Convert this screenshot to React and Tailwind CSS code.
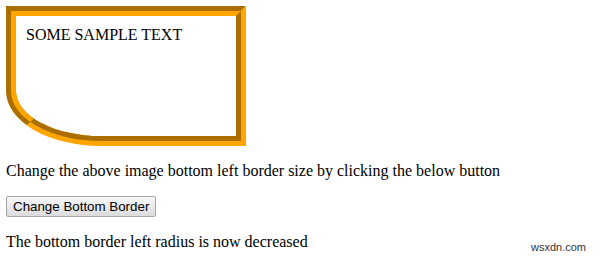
export default function App() {
  return (
    <div className="relative w-[600px] h-[258px] bg-white p-[6px] text-black overflow-hidden" style={{ fontFamily: '"Liberation Serif", "Times New Roman", serif' }}>
      <div className="w-[200px] h-[100px] p-[10px] border-[10px] [border-style:groove] border-[#ffa500] rounded-bl-[95px_55px] text-[16px] leading-[18px] box-content">
        SOME SAMPLE TEXT
      </div>
      <p className="my-[16px] text-[16px] leading-[18px]">Change the above image bottom left border size by clicking the below button</p>
      <button
        className="block h-[21px] px-[6px] border border-[#a6a6a6] rounded-[2px] bg-gradient-to-b from-[#f8f8f8] to-[#dcdcdc] text-[13.33px] leading-[15px] text-black"
        style={{ fontFamily: '"Liberation Sans", Arial, sans-serif' }}
      >
        Change Bottom Border
      </button>
      <p className="my-[16px] text-[16px] leading-[18px]">The bottom border left radius is now decreased</p>
      <div className="absolute right-[14px] bottom-[3px] text-[11px] text-[#333]" style={{ fontFamily: '"Liberation Sans", Arial, sans-serif' }}>wsxdn.com</div>
    </div>
  );
}
